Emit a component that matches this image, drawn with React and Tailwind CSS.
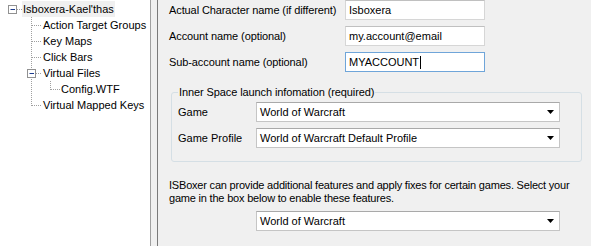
import React from "react";

const font = { fontFamily: '"Liberation Sans", Arial, sans-serif' };

function Expander({ x, y }) {
  return (
    <g>
      <rect x={x - 4} y={y - 4} width="8" height="8" fill="#fff" stroke="#919191" />
      <line x1={x - 2} y1={y} x2={x + 2.5} y2={y} stroke="#1c3b8e" />
    </g>
  );
}

function TreeLines() {
  const dot = { stroke: "#a0a0a0", strokeDasharray: "1 1" };
  return (
    <svg className="absolute left-0 top-0 pointer-events-none" width="150" height="246">
      <line x1="17" y1="9.5" x2="23" y2="9.5" {...dot} />
      <line x1="31.5" y1="17" x2="31.5" y2="106" {...dot} />
      {[25, 41, 57, 105].map((y) => (
        <line key={y} x1="32" y1={y + 0.5} x2="42" y2={y + 0.5} {...dot} />
      ))}
      <line x1="36" y1="73.5" x2="42" y2="73.5" {...dot} />
      <line x1="50.5" y1="81" x2="50.5" y2="90" {...dot} />
      <line x1="51" y1="89.5" x2="60" y2="89.5" {...dot} />
      <Expander x={12.5} y={9.5} />
      <Expander x={31.5} y={73.5} />
    </svg>
  );
}

function TreeRow({ indent, children, selected }) {
  return (
    <div className="h-[16px] flex items-center" style={{ paddingLeft: indent }}>
      <span className={"px-[1px] leading-[16px] whitespace-nowrap " + (selected ? "bg-[#f0f0f0]" : "")}>
        {children}
      </span>
    </div>
  );
}

function Arrow() {
  return (
    <svg width="7" height="4" viewBox="0 0 7 4" className="shrink-0">
      <path d="M0 0 H7 L3.5 4 Z" fill="#000" />
    </svg>
  );
}

function Combo({ value, className = "" }) {
  return (
    <div
      className={
        "w-[304px] h-[20px] bg-white border border-[#c5c5c5] border-t-[#a9a9a9] flex items-center pl-[3px] pr-[5px] " +
        className
      }
    >
      <span className="flex-1 whitespace-nowrap">{value}</span>
      <Arrow />
    </div>
  );
}

function TextBox({ value, focused }) {
  return (
    <div
      className={
        "w-[140px] h-[20px] bg-white border flex items-center pl-[3px] whitespace-nowrap " +
        (focused ? "border-[#6fa5d9]" : "border-[#d6d6d6] border-t-[#c0c0c0]")
      }
    >
      {value}
      {focused && <span className="inline-block w-[1px] h-[13px] bg-black ml-[1px]" />}
    </div>
  );
}

export default function App() {
  return (
    <div className="w-[591px] h-[246px] flex bg-[#f0f0f0] text-[11px] text-black overflow-hidden" style={font}>
      <div className="w-[150px] h-full bg-white relative pt-[1px]">
        <TreeLines />
        <TreeRow indent={22} selected>Isboxera-Kael'thas</TreeRow>
        <TreeRow indent={42}>Action Target Groups</TreeRow>
        <TreeRow indent={42}>Key Maps</TreeRow>
        <TreeRow indent={42}>Click Bars</TreeRow>
        <TreeRow indent={42}>Virtual Files</TreeRow>
        <TreeRow indent={60}>Config.WTF</TreeRow>
        <TreeRow indent={42}>Virtual Mapped Keys</TreeRow>
      </div>
      <div className="w-[8px] h-full border-l border-l-[#a0a0a0] border-r border-r-[#7a7a7a] bg-[#f0f0f0]" />
      <div className="flex-1 h-full pl-[11px]">
        <div className="flex flex-col gap-[6px]">
          <div className="flex items-center h-[20px]">
            <span className="w-[176px] whitespace-nowrap tracking-[-0.1px]">Actual Character name (if different)</span>
            <TextBox value="Isboxera" />
          </div>
          <div className="flex items-center h-[20px]">
            <span className="w-[176px] whitespace-nowrap tracking-[-0.1px]">Account name (optional)</span>
            <TextBox value="my.account@email" />
          </div>
          <div className="flex items-center h-[20px]">
            <span className="w-[176px] whitespace-nowrap tracking-[-0.1px]">Sub-account name (optional)</span>
            <TextBox value="MYACCOUNT" focused />
          </div>
        </div>
        <fieldset className="mt-[14px] ml-[2px] w-[411px] border border-[#d5dfe5] rounded-[3px] px-[6px] pb-[13px]">
          <legend className="leading-[13px] px-[1px] whitespace-nowrap tracking-[-0.1px]">Inner Space launch infomation (required)</legend>
          <div className="flex items-center mt-[3px] h-[20px]">
            <span className="w-[78px]">Game</span>
            <Combo value="World of Warcraft" />
          </div>
          <div className="flex items-center mt-[6px] h-[20px]">
            <span className="w-[78px]">Game Profile</span>
            <Combo value="World of Warcraft Default Profile" />
          </div>
        </fieldset>
        <p className="mt-[17px] leading-[13px] whitespace-nowrap tracking-[-0.2px]">
          ISBoxer can provide additional features and apply fixes for certain games. Select your
          <br />
          game in the box below to enable these features.
        </p>
        <div className="mt-[6px] ml-[87px]">
          <Combo value="World of Warcraft" />
        </div>
      </div>
    </div>
  );
}
